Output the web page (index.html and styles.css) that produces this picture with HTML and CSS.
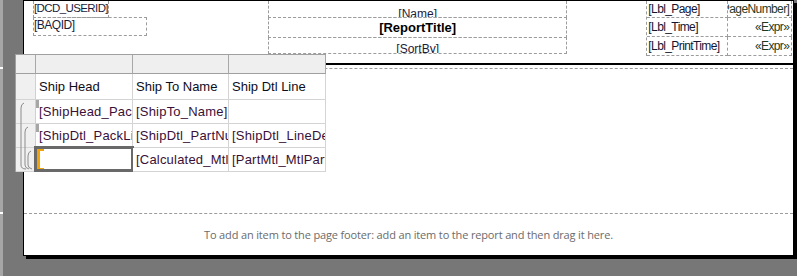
FILE: index.html
```html
<!DOCTYPE html>
<html lang="en">
<head>
  <meta charset="UTF-8" />
  <title>Report Designer</title>
  <link rel="stylesheet" href="styles.css">
</head>
<body>
  <div class="page">
    <div class="page-header">
      <div class="hdr-left">
        <div class="tb tb-user">[DCD_USERID]</div>
        <div class="tb tb-baq">[BAQID]</div>
      </div>
      <div class="hdr-center">
        <div class="tb tb-name">[Name]</div>
        <div class="tb tb-title">[ReportTitle]</div>
        <div class="tb tb-sort">[SortBy]</div>
      </div>
      <div class="hdr-right">
        <div class="cell lbl">[Lbl_Page]</div>
        <div class="cell val">[PageNumber]</div>
        <div class="cell lbl">[Lbl_Time]</div>
        <div class="cell val">«Expr»</div>
        <div class="cell lbl">[Lbl_PrintTime]</div>
        <div class="cell val">«Expr»</div>
      </div>
    </div>
    <div class="page-body"></div>
    <div class="page-footer">To add an item to the page footer: add an item to the report and then drag it here.</div>
  </div>

  <div class="tablix">
    <div class="h corner"></div>
    <div class="h"></div>
    <div class="h"></div>
    <div class="h"></div>

    <div class="rh"></div>
    <div class="c hd">Ship Head</div>
    <div class="c hd">Ship To Name</div>
    <div class="c hd">Ship Dtl Line</div>

    <div class="rh"></div>
    <div class="c mark">[ShipHead_PackNum]</div>
    <div class="c">[ShipTo_Name]</div>
    <div class="c"></div>

    <div class="rh"></div>
    <div class="c mark">[ShipDtl_PackLine]</div>
    <div class="c">[ShipDtl_PartNum]</div>
    <div class="c">[ShipDtl_LineDesc]</div>

    <div class="rh"></div>
    <div class="c selected"><span class="sel-bracket"></span></div>
    <div class="c">[Calculated_MtlPartNum]</div>
    <div class="c">[PartMtl_MtlPartNum]</div>

    <svg class="groups" width="20" height="118" viewBox="0 0 20 118">
      <path d="M8 48 Q5 49 5 53 L5 110 Q5 114 10 114" />
      <path d="M12 72 Q9 73 9 77 L9 110 Q9 113 13 114" />
      <path d="M15 96 Q12 97 12 101 L12 110 Q12 113 16 114" />
    </svg>
  </div>
</body>
</html>
```

FILE: styles.css
```css
body {
  margin: 0;
  height: 276px;
  overflow: hidden;
  font-family: "Liberation Sans", Arial, sans-serif;
  background:
    linear-gradient(#fff, #fff) 0 67px / 3px 2px no-repeat,
    linear-gradient(#fff, #fff) 0 212px / 3px 2px no-repeat,
    linear-gradient(to right, #a6a6a6 3px, #777 3px);
}

.page {
  margin-left: 23px;
  width: 769px;
  background-color: #fff;
  border: 1px solid #000;
  box-shadow: 3px 3px 0 #000;
}

/* report header band */
.page-header {
  height: 62px;
  border-bottom: 2px solid #000;
  display: flex;
  padding-left: 9px;
}

.tb {
  box-sizing: border-box;
  border: 1px dashed #9c9c9c;
  overflow: hidden;
  white-space: nowrap;
  color: #1b1b3a;
}

.hdr-left {
  width: 114px;
  display: flex;
  flex-direction: column;
  align-items: flex-start;
  font-size: 12px;
  letter-spacing: -0.5px;
}

.tb-user {
  width: 76px;
  height: 17px;
  line-height: 15px;
  border-top: none;
  font-size: 11.5px;
  letter-spacing: -0.6px;
}

.tb-baq {
  width: 114px;
  height: 19px;
  margin-top: -1px;
  line-height: 15px;
}

.hdr-center {
  width: 300px;
  margin-left: 121px;
  display: flex;
  flex-direction: column;
  text-align: center;
  font-size: 12px;
  color: #111;
}

.tb-name {
  height: 17px;
  line-height: 14px;
  padding-top: 6px;
  border-top: none;
}

.tb-title {
  height: 21px;
  margin-top: -1px;
  line-height: 19px;
  font-size: 13px;
  font-weight: bold;
  color: #000;
}

.tb-sort {
  height: 17px;
  margin-top: -1px;
  line-height: 14px;
  padding-top: 4px;
}

.hdr-right {
  width: 146px;
  margin-left: 79px;
  display: grid;
  grid-template-columns: 81px 64px;
  grid-template-rows: 17px 19px 19px;
  align-self: flex-start;
  border-left: 1px dashed #9c9c9c;
  font-size: 12px;
  letter-spacing: -0.6px;
}

.hdr-right .cell {
  box-sizing: border-box;
  border-right: 1px dashed #9c9c9c;
  border-bottom: 1px dashed #9c9c9c;
  overflow: hidden;
  white-space: nowrap;
  display: flex;
  align-items: center;
  color: #151530;
}

.hdr-right .lbl {
  padding-left: 1px;
}

.hdr-right .val {
  justify-content: flex-end;
  padding-right: 2px;
  color: #1f3a1f;
}

/* body and footer bands */
.page-body {
  margin-top: 3px;
  height: 144px;
  border-top: 1px dashed #9c9c9c;
}

.page-footer {
  height: 41px;
  border-top: 1px dashed #9c9c9c;
  display: flex;
  align-items: center;
  justify-content: center;
  font-family: "Open Sans", sans-serif;
  font-size: 11px;
  letter-spacing: -0.15px;
  color: #6b6b6b;
}

/* floating table (tablix) */
.tablix {
  position: absolute;
  left: 15px;
  top: 54px;
  display: grid;
  grid-template-columns: 20px 97px 96px 97px;
  grid-template-rows: 19px 26px 24px 24px 24px;
  border-top: 1px solid #a0a0a0;
  border-left: 1px solid #a0a0a0;
  font-size: 13px;
}

.tablix > div {
  box-sizing: border-box;
}

.h {
  background-color: #efefef;
  border-right: 1px solid #a8a8a8;
  border-bottom: 1px solid #a0a0a0;
}

.rh {
  background-color: #f0f0f0;
  border-right: 1px solid #d0d0d0;
  border-bottom: 1px solid #d4d4d4;
}

.c {
  position: relative;
  background-color: #fff;
  border-right: 1px solid #d4d4d4;
  border-bottom: 1px solid #d4d4d4;
  padding-left: 3px;
  display: flex;
  align-items: center;
  white-space: nowrap;
  overflow: hidden;
  color: #3a1038;
  letter-spacing: 0.2px;
}

.c.hd {
  color: #0d0d1a;
  letter-spacing: 0;
}

.c.mark::before {
  content: "";
  position: absolute;
  left: 0;
  top: 0;
  width: 3px;
  height: 8px;
  background-color: #a6a6a6;
}

.c.selected {
  overflow: visible;
}

.c.selected::after {
  content: "";
  position: absolute;
  left: -2px;
  top: -2px;
  right: -2px;
  bottom: -1px;
  border: 3px solid #696969;
}

.sel-bracket {
  position: absolute;
  left: 1px;
  top: 1px;
  width: 4px;
  height: 17px;
  border: 2px solid #f0a30a;
  border-left-width: 3px;
  border-right: none;
}

.groups {
  position: absolute;
  left: 0;
  top: 0;
  fill: none;
  stroke: #8c8c8c;
  stroke-width: 1;
}
```
